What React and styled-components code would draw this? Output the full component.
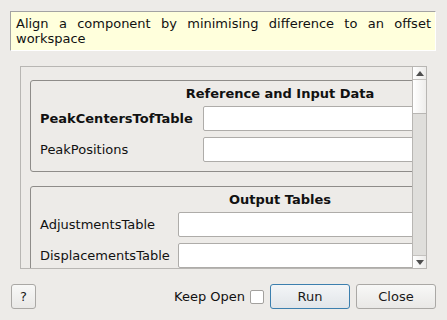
import React from "react";
import styled, { createGlobalStyle } from "styled-components";

const Global = createGlobalStyle`
  html, body { margin: 0; padding: 0; }
  body {
    background: #edebe8;
    font-family: "DejaVu Sans", "Liberation Sans", sans-serif;
    font-size: 13px;
    color: #1a1a1a;
  }
  * { box-sizing: border-box; }
`;

const Page = styled.div`
  width: 447px;
  height: 320px;
  display: flex;
  flex-direction: column;
  overflow: hidden;
`;

const Description = styled.div`
  margin: 11px 11px 0 10px;
  height: 40px;
  padding: 4px 4px 3px 5px;
  background: #ffffdc;
  border-top: 1px solid #a3a3a3;
  border-left: 1px solid #a3a3a3;
  border-right: 1px solid #ffffff;
  border-bottom: 1px solid #ffffff;
  line-height: 15px;
  text-align: justify;
  color: #111;
`;

const ScrollFrame = styled.div`
  margin: 15px 20px 0 20px;
  height: 203px;
  border: 1px solid #b8b6b3;
  display: flex;
`;

const Viewport = styled.div`
  flex: 1;
  overflow: hidden;
  padding: 13px 0 0 9px;
  display: flex;
  flex-direction: column;
  gap: 14px;
`;

const Group = styled.div`
  flex: none;
  width: 501px;
  border: 1px solid #8e8c89;
  border-radius: 3px;
  padding: 5px 10px 9px 9px;
`;

const GroupTitle = styled.div`
  font-weight: bold;
  text-align: center;
  line-height: 15px;
  margin-bottom: 5px;
  color: #111;
`;

const Rows = styled.div`
  display: grid;
  grid-template-columns: auto 1fr;
  column-gap: ${(p) => p.$gap}px;
  row-gap: 6px;
  align-items: center;
`;

const Label = styled.div`
  font-weight: ${(p) => (p.$bold ? "bold" : "normal")};
  white-space: nowrap;
  color: #111;
`;

const Input = styled.div`
  height: 25px;
  background: #ffffff;
  border: 1px solid #aeaca9;
  border-radius: 2px;
`;

const ScrollBar = styled.div`
  width: 14px;
  border-left: 1px solid #b8b6b3;
  display: flex;
  flex-direction: column;
  background: #dfdedb;
`;

const ArrowButton = styled.div`
  height: 13px;
  display: flex;
  align-items: center;
  justify-content: center;
  background: linear-gradient(to right, #ffffff, #ecebe9);
  border-${(p) => (p.$down ? "top" : "bottom")}: 1px solid #c4c2bf;
`;

const Thumb = styled.div`
  height: 34px;
  background: linear-gradient(to right, #ffffff, #eeedeb);
  border-bottom: 1px solid #b8b6b3;
`;

const Track = styled.div`
  flex: 1;
`;

const BottomBar = styled.div`
  margin: 15px 11px 0 11px;
  height: 25px;
  display: flex;
  align-items: center;
`;

const Button = styled.button`
  height: 25px;
  width: ${(p) => p.$w}px;
  margin-left: ${(p) => p.$ml || 0}px;
  padding: 0;
  font-family: inherit;
  font-size: 13px;
  color: #1a1a1a;
  border-radius: 3px;
  border: 1px solid ${(p) => (p.$primary ? "#3c7fae" : "#aaa8a5")};
  background: ${(p) =>
    p.$primary
      ? "linear-gradient(#f3f5f7, #e1e5e9)"
      : "linear-gradient(#f8f8f7, #e9e8e6)"};
`;

const Spacer = styled.div`
  flex: 1;
`;

const KeepLabel = styled.span`
  color: #111;
  margin-right: 5px;
`;

const Check = styled.div`
  width: 14px;
  height: 14px;
  background: #fff;
  border: 1px solid #a3a19e;
  border-radius: 2px;
`;

const Tri = ({ down }) => (
  <svg width="8" height="5" viewBox="0 0 8 5">
    <polygon points={down ? "0,0 8,0 4,5" : "0,5 8,5 4,0"} fill="#4e4e4e" />
  </svg>
);

export default function App() {
  return (
    <Page>
      <Global />
      <Description>
        Align a component by minimising difference to an offset workspace
      </Description>
      <ScrollFrame>
        <Viewport>
          <Group>
            <GroupTitle>Reference and Input Data</GroupTitle>
            <Rows $gap={10}>
              <Label $bold>PeakCentersTofTable</Label>
              <Input />
              <Label>PeakPositions</Label>
              <Input />
            </Rows>
          </Group>
          <Group>
            <GroupTitle>Output Tables</GroupTitle>
            <Rows $gap={8}>
              <Label>AdjustmentsTable</Label>
              <Input />
              <Label>DisplacementsTable</Label>
              <Input />
            </Rows>
          </Group>
        </Viewport>
        <ScrollBar>
          <ArrowButton>
            <Tri />
          </ArrowButton>
          <Thumb />
          <Track />
          <ArrowButton $down>
            <Tri down />
          </ArrowButton>
        </ScrollBar>
      </ScrollFrame>
      <BottomBar>
        <Button $w={25}>?</Button>
        <Spacer />
        <KeepLabel>Keep Open</KeepLabel>
        <Check />
        <Button $w={80} $ml={6} $primary>
          Run
        </Button>
        <Button $w={80} $ml={6}>
          Close
        </Button>
      </BottomBar>
    </Page>
  );
}
